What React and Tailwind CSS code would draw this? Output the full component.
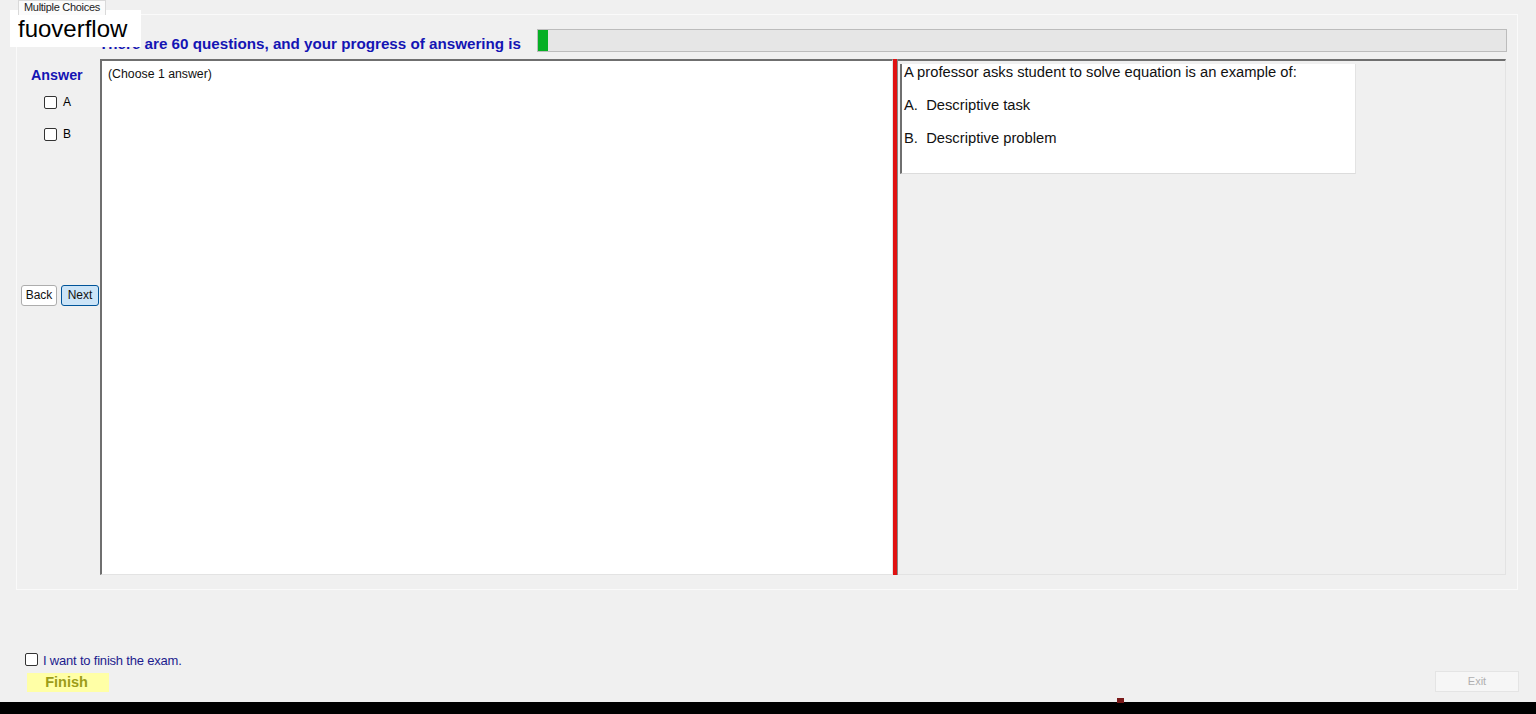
import React from 'react';

const Box = ({ className = '' }) =>
<div className={`w-[13px] h-[13px] bg-white border border-[#333333] rounded-[2px] ${className}`} />;

const App = () => {
  return (
    <div className="relative w-[1536px] h-[714px] bg-[#f0f0f0] overflow-hidden flex flex-col font-['Liberation_Sans',Arial,sans-serif] text-black">
      {/* tab strip */}
      <div className="h-[14px] pl-[18px] flex">
        <div className="w-[88px] h-[15px] bg-[#fbfbfb] border border-b-0 border-[#d9d9d9] pl-[5px] text-[11px] leading-[13px] text-[#222] tracking-[-0.3px] relative z-10">
          Multiple Choices
        </div>
      </div>

      {/* tab page */}
      <div className="ml-[16px] w-[1502px] h-[576px] border border-[#fafafa] flex flex-col">
        <div className="mt-[14px] h-[23px] flex items-end">
          <div className="pl-[82px] text-[15.2px] leading-[17px] font-bold text-[#1414b4]">
            There are 60 questions, and your progress of answering is
          </div>
          <div className="ml-auto mr-[10px] w-[970px] h-[23px] border border-[#bcbcbc] bg-[#e6e6e6] flex">
            <div className="w-[10px] h-full bg-[#06b025]" />
          </div>
        </div>

        <div className="mt-[7px] h-[516px] flex">
          {/* answer column */}
          <div className="w-[83px] flex flex-col">
            <div className="mt-[8px] pl-[14px] text-[14.3px] leading-[16px] font-bold text-[#1414b4]">Answer</div>
            <div className="mt-[13px] pl-[27px] flex items-center gap-[6px] text-[12px] leading-[13px]">
              <Box /> <span>A</span>
            </div>
            <div className="mt-[19px] pl-[27px] flex items-center gap-[6px] text-[12px] leading-[13px]">
              <Box /> <span>B</span>
            </div>
            <div className="mt-[144px] pl-[4px] flex gap-[4px]">
              <button className="w-[36px] h-[21px] bg-white border border-[#adadad] rounded-[3px] text-[12px] leading-[19px] text-[#111]">Back</button>
              <button className="w-[38px] h-[21px] bg-[#cce4f7] border border-[#005499] rounded-[3px] text-[12px] leading-[19px] text-[#111]">Next</button>
            </div>
          </div>

          {/* choice area */}
          <div className="w-[793px] bg-white border-t-2 border-l-2 border-r border-b border-t-[#6f6f6f] border-l-[#6f6f6f] border-r-[#e3e3e3] border-b-[#e3e3e3] pl-[6px] pt-[6px]">
            <div className="text-[12.3px] leading-[14px] text-[#111]">(Choose 1 answer)</div>
          </div>

          {/* splitter */}
          <div className="w-[5px] bg-[#e01212] border-r border-r-[#888]" />

          {/* question area */}
          <div className="flex-1 mr-[11px] border-t-2 border-r border-b border-t-[#6f6f6f] border-r-[#e3e3e3] border-b-[#e3e3e3]">
            <div className="ml-[2px] w-[456px] h-[110px] bg-white border-l-2 border-r border-b border-l-[#6f6f6f] border-r-[#e3e3e3] border-b-[#dcdcdc] pl-[2px] text-[14.75px] leading-[17px] text-[#111]">
              <div className="mt-[3px]">A professor asks student to solve equation is an example of:</div>
              <div className="mt-[16px]">A.&nbsp; Descriptive task</div>
              <div className="mt-[16px]">B.&nbsp; Descriptive problem</div>
            </div>
          </div>
        </div>
      </div>

      {/* finish area */}
      <div className="mt-[62px] pl-[25px] flex items-center gap-[5px] h-[16px]">
        <Box className="-mt-[2px]" />
        <span className="mt-[1px] text-[13px] leading-[16px] text-[#1c1c8e] tracking-[-0.2px]">I want to finish the exam.</span>
      </div>
      <div className="mt-[3px] flex items-end justify-between">
        <button className="ml-[27px] w-[82px] h-[19px] bg-[#ffffa6] text-[14.5px] leading-[19px] font-bold text-[#9c9c18] pr-[3px]">Finish</button>
        <button className="mr-[17px] w-[84px] h-[21px] bg-[#f6f6f6] border border-[#e4e4e4] text-[11px] leading-[19px] text-[#b0b0b0]">Exit</button>
      </div>

      {/* taskbar strip */}
      <div className="mt-auto h-[12px] bg-black" />
      <div className="absolute left-[1117px] top-[698px] w-[7px] h-[5px] bg-[#7a1a1a]" />

      {/* watermark */}
      <div className="absolute left-[10px] top-[10px] w-[131px] h-[37px] bg-white pl-[8px] text-[24px] leading-[37px] text-black">
        fuoverflow
      </div>
    </div>);

};

export default App;
